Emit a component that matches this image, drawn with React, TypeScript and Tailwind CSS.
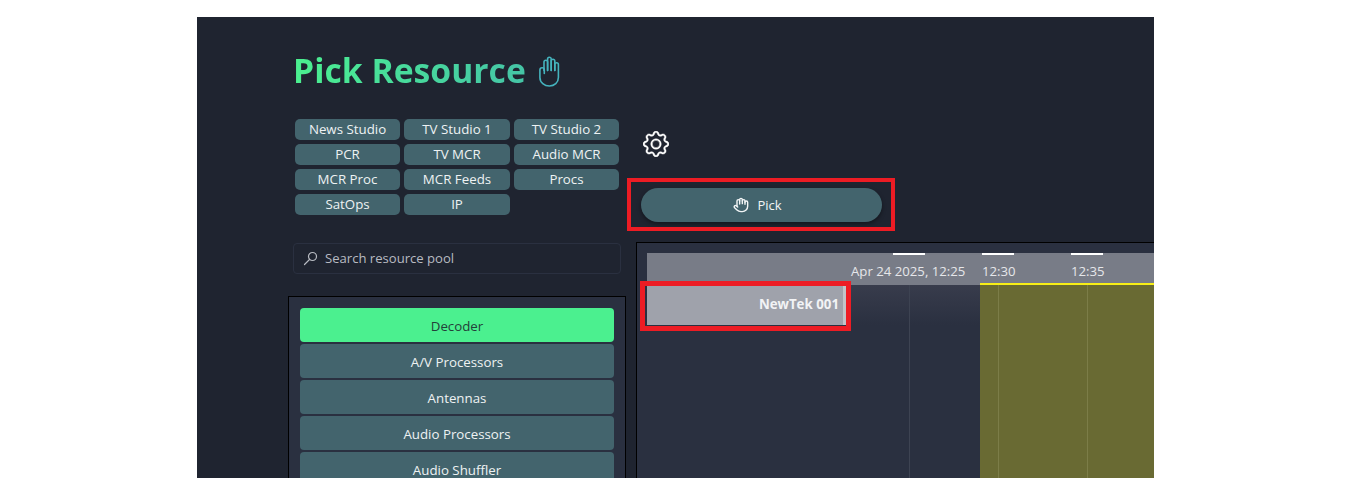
import { Hand } from 'lucide-react';
import { BsGear } from 'react-icons/bs';

const chips = [
  'News Studio', 'TV Studio 1', 'TV Studio 2',
  'PCR', 'TV MCR', 'Audio MCR',
  'MCR Proc', 'MCR Feeds', 'Procs',
  'SatOps', 'IP',
];

const resources = ['A/V Processors', 'Antennas', 'Audio Processors', 'Audio Shuffler'];

const font = { fontFamily: '"Open Sans", "Noto Sans", sans-serif' };

const TallHand = () => (
  <svg width="24" height="33" viewBox="0 0 24 32" fill="none" stroke="#45b3bd" strokeWidth="1.6" strokeLinecap="round" strokeLinejoin="round">
    <path d="M7 15V6.500a1.800 1.800 0 0 1 3.600 0V15" />
    <path d="M10.600 15V3.500a1.800 1.800 0 0 1 3.600 0V15" />
    <path d="M14.200 15V5.500a1.800 1.800 0 0 1 3.600 0V15" />
    <path d="M17.800 15V9a1.800 1.800 0 0 1 3.600 0v13c0 5-4 8.500-9 8.500s-9.500-3.500-9.500-8.500v-7.500a2.200 2.200 0 0 1 4.400 0V18" />
  </svg>
);

const SearchGlass = () => (
  <svg width="15" height="15" viewBox="0 0 15 15" fill="none" stroke="currentColor" strokeWidth="1.2" strokeLinecap="round">
    <circle cx="9.500" cy="5.500" r="4" />
    <path d="M6.500 8.500L1.500 13.500" />
  </svg>
);

const Tick = ({ label, className = '' }: { label: string; className?: string }) => (
  <div className="w-[89px] shrink-0">
    <div className="h-[2px] w-[32px] bg-white" />
    <div className={`mt-[7px] whitespace-nowrap ${className}`}>{label}</div>
  </div>
);

const Timeline = () => (
  <div className="flex h-[236px] w-[518px] flex-col overflow-hidden border-t border-l border-black bg-[#2a3040] pl-[10px] pt-[10px]">
    {/* header */}
    <div className="flex h-[32px] shrink-0 bg-[#787c87] pl-[246px] text-[13.2px] text-[#e6e7ea]">
      <Tick label="Apr 24 2025, 12:25" className="-ml-[42px]" />
      <Tick label="12:30" />
      <Tick label="12:35" />
    </div>
    {/* body */}
    <div className="flex flex-1">
      <div className="flex h-[40px] w-[200px] shrink-0 items-center justify-end border-r-[4px] border-[#c2c4c9] bg-[#9fa2ab] pr-[4px] text-[13.3px] font-bold text-[#f2f3f5]">
        NewTek 001
      </div>
      <div className="w-[63px] shrink-0 border-r border-[#3d4352] bg-[linear-gradient(#383c4c,#2a3040_40px)]" />
      <div className="w-[70px] shrink-0 bg-[linear-gradient(#383c4c,#2a3040_40px)]" />
      <div className="relative -mt-[2px] flex flex-1 border-t-2 border-[#f7ee17] bg-[#696a33]">
        <div className="w-[19px] shrink-0 border-r border-[#7c7d48]" />
        <div className="w-[89px] shrink-0 border-r border-[#7c7d48]" />
      </div>
    </div>
  </div>
);

export default function App() {
  return (
    <div className="h-[494px] w-[1346px] overflow-hidden bg-white pl-[197px] pt-[17px]" style={font}>
      <div className="relative h-[461px] w-[957px] overflow-hidden bg-[#1f2430]">
        {/* title */}
        <div className="ml-[96px] flex h-[102px] items-center gap-[11px] pt-[6px]">
          <h1 className="bg-gradient-to-r from-[#4bf08f] to-[#45c4a6] bg-clip-text text-[33.7px] leading-none font-bold text-transparent">
            Pick Resource
          </h1>
          <TallHand />
        </div>

        <div className="flex">
          {/* left column */}
          <div className="ml-[91px] w-[339px] shrink-0">
            <div className="ml-[7px] grid w-[324px] grid-cols-[105px_106px_105px] gap-[4px]">
              {chips.map(chip => (
                <div key={chip} className="flex h-[21px] items-center justify-center rounded-[5px] bg-[#43646d] text-[13.3px] text-[#eef2f3]">
                  {chip}
                </div>
              ))}
            </div>

            <div className="ml-[5px] mt-[28px] flex h-[31px] w-[328px] items-center gap-[7px] rounded-[4px] border border-[#2a3040] pl-[9px] text-[13.1px] text-[#b8bbc2]">
              <SearchGlass />
              Search resource pool
            </div>

            <div className="mt-[22px] h-[200px] w-[338px] border border-black bg-[#2a3040] px-[11px] pt-[11px]">
              <div className="flex h-[34px] items-center justify-center rounded-[4px] bg-[#4bf08f] pt-[3px] text-[13.3px] text-[#24403a]">
                Decoder
              </div>
              {resources.map(name => (
                <div key={name} className="mt-[2px] flex h-[34px] items-center justify-center rounded-[4px] bg-[#43646d] pt-[3px] text-[13.3px] text-[#eef2f3]">
                  {name}
                </div>
              ))}
            </div>
          </div>

          {/* right column */}
          <div className="flex-1">
            <BsGear size={26} stroke="currentColor" strokeWidth={0.25} className="ml-[16px] mt-[12px] text-white" />
            <button className="ml-[14px] mt-[31px] flex h-[34px] w-[241px] items-center justify-center gap-[8px] rounded-full bg-[#43646d] pr-[8px] pt-[2px] text-[13px] text-[#f2f5f6] shadow-[0_2px_4px_rgba(0,0,0,0.4)]">
              <Hand size={16} strokeWidth={2.1} className="-mt-[2px]" />
              Pick
            </button>
            <div className="ml-[9px] mt-[20px]">
              <Timeline />
            </div>
          </div>
        </div>

        {/* red callouts */}
        <div className="absolute left-[430px] top-[161px] h-[53px] w-[268px] border-[4px] border-[#ed1c24]" />
        <div className="absolute left-[443px] top-[264px] h-[50px] w-[211px] border-[5px] border-[#ed1c24]" />
      </div>
    </div>
  );
}
